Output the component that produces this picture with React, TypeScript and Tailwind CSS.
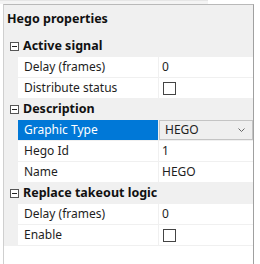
import type { ReactNode } from "react"

const font = { fontFamily: '"Noto Sans", "Open Sans", sans-serif' }

const Minus = () => (
  <svg width="9" height="9" viewBox="0 0 9 9" className="shrink-0">
    <rect x="0.5" y="0.5" width="8" height="8" fill="#fff" stroke="#555" />
    <line x1="2" y1="4.5" x2="7" y2="4.5" stroke="#222" />
  </svg>
)

const Category = ({ title }: { title: string }) => (
  <div className="flex h-[21px] items-center bg-[#f0f0f0]">
    <div className="flex w-[18px] justify-center pl-[3px]">
      <Minus />
    </div>
    <span className="pl-[1px] text-[12.5px] font-bold text-[#111]">{title}</span>
  </div>
)

const Row = ({ label, children, selected }: { label: string; children?: ReactNode; selected?: boolean }) => (
  <div className="flex h-[21px] border-b border-[#f0f0f0]">
    <div className="w-[14px] shrink-0 bg-[#f0f0f0]" />
    <div
      className={`flex w-[141px] shrink-0 items-center border-r border-[#f0f0f0] pl-[6px] ${
        selected ? "bg-[#0078d7] text-white" : "bg-white text-[#1e1e1e]"
      }`}
    >
      {label}
    </div>
    <div className="flex flex-1 items-center bg-white text-[#1e1e1e]">{children}</div>
  </div>
)

const Check = () => <div className="ml-[4px] h-[13px] w-[13px] border border-[#444] bg-white" />

export default function App() {
  return (
    <div className="h-[264px] w-[260px] overflow-hidden bg-white text-[12px]" style={font}>
      <div className="h-[4px] w-[208px] border-t border-[#e6e6e6] bg-[#f4f4f4]" />
      <div className="ml-[3px] flex h-[260px] w-[251px] flex-col border-l border-t border-r border-l-[#cfcfcf] border-t-[#b9b9b9] border-r-[#a0a0a0]">
        <div className="flex h-[31px] shrink-0 items-center bg-[#f0f0f0] pl-[3px] pb-[2px] text-[12.5px] font-bold text-[#111]">
          Hego properties
        </div>
        <Category title="Active signal" />
        <Row label="Delay (frames)">
          <span className="pl-[3px]">0</span>
        </Row>
        <Row label="Distribute status">
          <Check />
        </Row>
        <Category title="Description" />
        <Row label="Graphic Type" selected>
          <div className="flex h-[20px] w-full items-center justify-between border border-[#c4c4c4] bg-[#efefef] pl-[5px] pr-[7px]">
            <span>HEGO</span>
            <svg width="7" height="4" viewBox="0 0 7 4">
              <path d="M0.5 0.5 L3.5 3.5 L6.5 0.5" fill="none" stroke="#666" />
            </svg>
          </div>
        </Row>
        <Row label="Hego Id">
          <span className="pl-[3px]">1</span>
        </Row>
        <Row label="Name">
          <span className="pl-[3px]">HEGO</span>
        </Row>
        <Category title="Replace takeout logic" />
        <Row label="Delay (frames)">
          <span className="pl-[3px]">0</span>
        </Row>
        <Row label="Enable">
          <Check />
        </Row>
        <div className="flex-1 bg-white" />
      </div>
    </div>
  )
}
